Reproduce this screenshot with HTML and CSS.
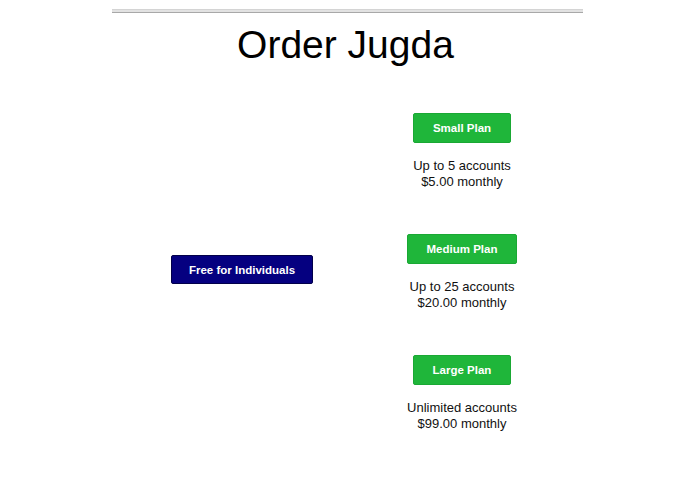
FILE: index.html
```html
<!DOCTYPE html>
<html>
<head>
<meta charset="utf-8">
<link rel="stylesheet" href="styles.css">
</head>
<body>
<div class="page">
  <div class="rule"></div>
  <h1 class="title">Order Jugda</h1>
  <div class="plans">
    <div class="col-left">
      <button class="btn btn-free">Free for Individuals</button>
    </div>
    <div class="col-right">
      <div class="plan">
        <button class="btn btn-green">Small Plan</button>
        <p class="desc">Up to 5 accounts<br>$5.00 monthly</p>
      </div>
      <div class="plan">
        <button class="btn btn-green">Medium Plan</button>
        <p class="desc">Up to 25 accounts<br>$20.00 monthly</p>
      </div>
      <div class="plan">
        <button class="btn btn-green">Large Plan</button>
        <p class="desc">Unlimited accounts<br>$99.00 monthly</p>
      </div>
    </div>
  </div>
</div>
</body>
</html>
```
FILE: styles.css
```css
html, body {
  margin: 0;
  padding: 0;
  background: #ffffff;
}
body {
  font-family: "Liberation Sans", Arial, sans-serif;
  color: #111;
}
.page {
  width: 471px;
  margin: 0 auto;
  padding-top: 9px;
}
.rule {
  height: 2px;
  border-top: 1px solid #d4d4d4;
  border-bottom: 1px solid #a8a8a8;
  background: #e2e2e2;
}
.title {
  margin: 10px 0 0 0;
  font-size: 39px;
  font-weight: normal;
  line-height: 44px;
  text-align: center;
  color: #000;
  padding-right: 4px;
}
.plans {
  display: flex;
  align-items: center;
  margin-top: 46px;
}
.col-left {
  width: 260px;
  display: flex;
  justify-content: center;
  margin-bottom: 6px;
}
.col-right {
  width: 180px;
  display: flex;
  flex-direction: column;
  align-items: center;
  gap: 44px;
}
.plan {
  display: flex;
  flex-direction: column;
  align-items: center;
}
.btn {
  font-family: "Liberation Sans", Arial, sans-serif;
  font-size: 11.5px;
  font-weight: bold;
  color: #fff;
  border-radius: 2px;
  height: 30px;
  padding: 0 19px;
  cursor: pointer;
}
.btn-green {
  background: #1fb63a;
  border: 1px solid #1aa834;
}
.btn-free {
  background: #050080;
  border: 1px solid #02004a;
  height: 29px;
  padding: 0 17px;
}
.desc {
  margin: 15px 0 0 0;
  font-size: 13px;
  line-height: 16px;
  text-align: center;
  color: #111;
}
```
